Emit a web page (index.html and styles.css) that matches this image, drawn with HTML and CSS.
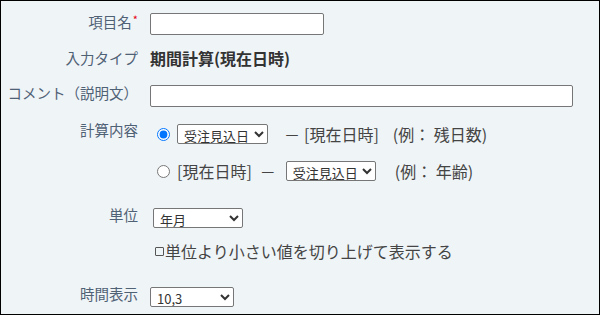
FILE: index.html
```html
<!DOCTYPE html>
<html lang="ja">
<head>
<meta charset="utf-8">
<link rel="stylesheet" href="styles.css">
</head>
<body>
<div class="frame">
  <div class="row r1">
    <div class="lbl">項目名<span class="req">*</span></div>
    <div class="val"><input type="text" class="txt short"></div>
  </div>
  <div class="row r2">
    <div class="lbl">入力タイプ</div>
    <div class="val type">期間計算(現在日時)</div>
  </div>
  <div class="row r3">
    <div class="lbl">コメント（説明文）</div>
    <div class="val"><input type="text" class="txt long"></div>
  </div>
  <div class="row r4">
    <div class="lbl">計算内容</div>
    <div class="val opts">
      <div class="opt">
        <input type="radio" name="calc" class="radio" checked>
        <select class="sel sel-date first"><option>受注見込日</option></select>
        <span class="dash d1">－</span>
        <span class="now n1">[現在日時]</span>
        <span class="ex e1">(例：&nbsp;残日数)</span>
      </div>
      <div class="opt">
        <input type="radio" name="calc" class="radio">
        <span class="now n2">[現在日時]</span>
        <span class="dash d2">－</span>
        <select class="sel sel-date second"><option>受注見込日</option></select>
        <span class="ex e2">(例：&nbsp;年齢)</span>
      </div>
    </div>
  </div>
  <div class="row r6">
    <div class="lbl">単位</div>
    <div class="val"><select class="sel sel-unit"><option>年月</option></select></div>
  </div>
  <div class="row r7">
    <div class="lbl"></div>
    <div class="val"><label class="chk"><input type="checkbox" class="box">単位より小さい値を切り上げて表示する</label></div>
  </div>
  <div class="row r8">
    <div class="lbl">時間表示</div>
    <div class="val"><select class="sel sel-time"><option>10,3</option></select></div>
  </div>
</div>
</body>
</html>
```
FILE: styles.css
```css
html, body {
  margin: 0;
  padding: 0;
}
body {
  font-family: "Noto Sans CJK JP", "Noto Sans", sans-serif;
  background: #ffffff;
}
.frame {
  box-sizing: border-box;
  width: 600px;
  height: 315px;
  border: 1px solid #000;
  background: #eff4f7;
  padding-top: 12px;
  overflow: hidden;
}
.row {
  display: flex;
  align-items: flex-start;
}
.lbl {
  width: 137px;
  flex-shrink: 0;
  text-align: right;
  font-size: 14.5px;
  line-height: 18px;
  color: #4f6175;
  white-space: nowrap;
}
.req {
  color: #e60012;
  font-size: 11px;
  line-height: 10px;
  vertical-align: top;
  position: relative;
  top: 1px;
  margin-left: 1px;
}
.val {
  margin-left: 12px;
  display: flex;
  flex-direction: column;
  align-items: flex-start;
}
.txt {
  display: block;
  box-sizing: border-box;
  height: 22px;
  border: 1px solid #767676;
  border-radius: 2px;
  background: #fff;
  margin: 0;
  padding: 0 4px;
}
.short { width: 174px; }
.long { width: 423px; }

.r2 { margin-top: 14px; }
.type {
  font-size: 16px;
  font-weight: bold;
  line-height: 18px;
  color: #333;
  display: block;
}
.r3 { margin-top: 18px; }
.r3 .lbl { margin-top: -1px; }

.r4 { margin-top: 14px; }
.opt {
  display: flex;
  align-items: center;
  height: 26px;
  font-size: 16px;
  line-height: 20px;
  color: #444;
  white-space: nowrap;
}
.opt + .opt { margin-top: 11px; }
.radio {
  width: 13px;
  height: 13px;
  margin: 0 0 0 7px;
  accent-color: #0075ff;
}
.sel {
  display: block;
  box-sizing: border-box;
  height: 20px;
  font-family: "Noto Sans CJK JP", "Noto Sans", sans-serif;
  font-size: 13px;
  line-height: 16px;
  color: #333;
  background: #fff;
  border: 1px solid #767676;
  border-radius: 2px;
  padding: 0 0 0 2px;
  margin: 0;
}
.sel-date { width: 91px; }
.first { margin-left: 7px; }
.d1 { margin-left: 16px; }
.n1 { margin-left: 4px; }
.e1 { margin-left: 14px; }
.n2 { margin-left: 7px; }
.d2 { margin-left: 8px; }
.second { margin-left: 10px; width: 90px; }
.e2 { margin-left: 19px; }

.r6 { margin-top: 24px; }
.r6 .lbl { margin-top: -2px; }
.sel-unit { width: 90px; margin-left: 3px; }

.r7 { margin-top: 12px; }
.chk {
  display: flex;
  align-items: center;
  height: 22px;
  font-size: 16px;
  line-height: 22px;
  color: #444;
  margin-left: 4px;
  white-space: nowrap;
}
.box {
  appearance: none;
  -webkit-appearance: none;
  box-sizing: border-box;
  width: 9px;
  height: 9px;
  border: 1px solid #555;
  border-radius: 1px;
  background: transparent;
  margin: 0 1px 0 1px;
}

.r8 { margin-top: 25px; }
.r8 .lbl { margin-top: -2px; }
.sel-time { width: 84px; }
```
